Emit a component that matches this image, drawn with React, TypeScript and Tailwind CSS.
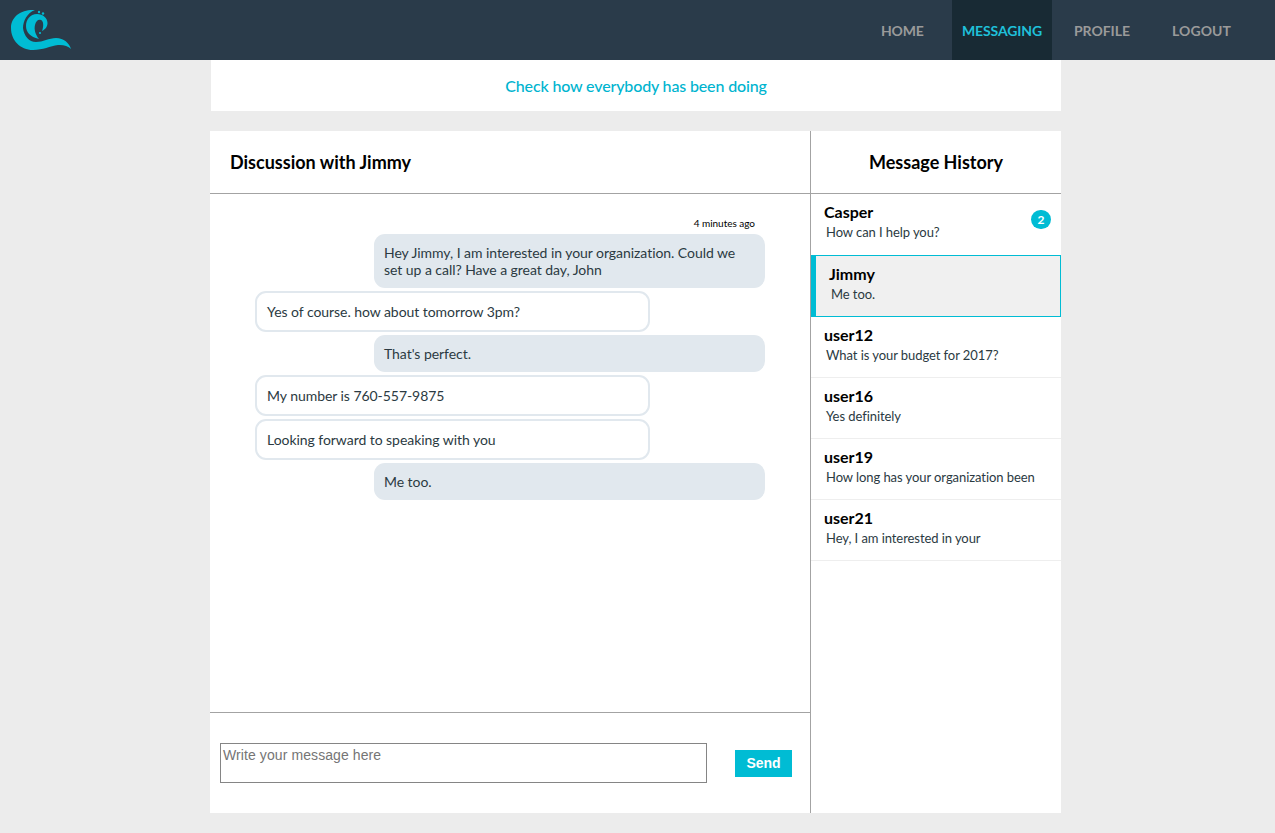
const navItems = [
  { label: "HOME", className: "w-[84px] pl-[13px] tracking-[-0.2px] text-[#9a9a9a]" },
  { label: "MESSAGING", className: "w-[100px] justify-center bg-[#182a34] tracking-[-0.12px] text-[#1fc0da]" },
  { label: "PROFILE", className: "w-[100px] pl-[22px] tracking-[-0.05px] text-[#9a9a9a]" },
  { label: "LOGOUT", className: "w-[103px] pl-[20px] tracking-[0.1px] text-[#9a9a9a]" },
];

const messages = [
  { id: 1, mine: true, text: "Hey Jimmy, I am interested in your organization. Could we set up a call? Have a great day, John" },
  { id: 2, mine: false, text: "Yes of course. how about tomorrow 3pm?" },
  { id: 3, mine: true, text: "That's perfect." },
  { id: 4, mine: false, text: "My number is 760-557-9875" },
  { id: 5, mine: false, text: "Looking forward to speaking with you" },
  { id: 6, mine: true, text: "Me too." },
];

const threads = [
  { name: "user12", text: "What is your budget for 2017?" },
  { name: "user16", text: "Yes definitely" },
  { name: "user19", text: "How long has your organization been" },
  { name: "user21", text: "Hey, I am interested in your" },
];

function Logo() {
  return (
    <svg viewBox="10 8 62 42" className="h-[42px] w-[62px]" fill="#00bcd4">
      <path d="M35 9C22 8 11 15 11 27C11 39 20 49 33 49C43 49 50 45 58 44C63 43.5 68 45 71 48C69 42 64 37 56 37C49 37 43 41 36 41C29 41 24 35 23 27C23 20 27 12 35 9z" />
      <path d="M37 13C30 13 26 19 26 25C26 31 30 36 39 38C35 33 34 28 35 24C36 20 38 18 41 19C43.5 20 44 25 42 30C46 28 47.5 25 47.5 22C47.5 17 43 13 37 13z" />
      <circle cx="39" cy="11" r="1.2" />
      <circle cx="43" cy="12.5" r="1.2" />
      <circle cx="40" cy="32" r="1.1" />
    </svg>
  );
}

function Bubble({ mine, text }: { mine: boolean; text: string }) {
  if (mine) {
    return (
      <div className="ml-[164px] w-[391px] rounded-[11px] bg-[#e1e8ee] px-[10px] py-[10px] text-[14px] leading-[17px] tracking-[-0.05px] text-[#2b3a42]">
        {text}
      </div>
    );
  }
  return (
    <div className="ml-[45px] w-[395px] rounded-[11px] border-2 border-[#e1e8ee] bg-white px-[10px] py-[10px] text-[14px] leading-[17px] tracking-[-0.05px] text-[#2b3a42]">
      {text}
    </div>
  );
}

export default function App() {
  return (
    <div className="flex h-[833px] flex-col overflow-hidden bg-[#ececec] font-['Lato','Open_Sans',sans-serif]">
      <header className="flex h-[60px] shrink-0 items-center justify-between bg-[#2a3b4a] pl-[10px]">
        <Logo />
        <nav className="mr-[20px] flex h-full">
          {navItems.map((item) => (
            <a key={item.label} className={`flex h-full items-center text-[14px] font-bold ${item.className}`}>
              {item.label}
            </a>
          ))}
        </nav>
      </header>

      <div className="ml-[211px] flex h-[51px] w-[850px] shrink-0 items-center justify-center bg-white text-[16px] font-medium tracking-[-0.15px] text-[#00b4cf]">
        Check how everybody has been doing
      </div>

      <main className="ml-[210px] mt-[20px] flex h-[682px] w-[851px] bg-white">
        <section className="flex w-[601px] flex-col border-r border-[#a3a3a3]">
          <h2 className="flex h-[63px] shrink-0 items-center border-b border-[#a3a3a3] pl-[20px] text-[18px] font-bold text-black">
            Discussion with Jimmy
          </h2>
          <div className="flex-1 pt-[23px]">
            <p className="mb-[5px] pr-[55px] text-right text-[10px] leading-[12px] tracking-[-0.02px] text-black">4 minutes ago</p>
            <div className="flex flex-col gap-[3px]">
              {messages.map((message) => (
                <Bubble key={message.id} mine={message.mine} text={message.text} />
              ))}
            </div>
          </div>
          <div className="flex h-[101px] shrink-0 items-start border-t border-[#a3a3a3] pl-[10px] pt-[30px]">
            <textarea
              placeholder="Write your message here"
              className="h-[40px] w-[487px] resize-none border border-[#858585] px-[2px] pb-[2px] pt-[3px] font-['Liberation_Sans',sans-serif] text-[14px] leading-[16px] tracking-[0.09px] placeholder:text-[#757575]"
            />
            <button className="ml-[28px] mt-[7px] h-[27px] w-[57px] bg-[#00bcd4] font-['Liberation_Sans',sans-serif] text-[14px] font-bold text-white">
              Send
            </button>
          </div>
        </section>

        <aside className="flex w-[250px] flex-col">
          <h2 className="flex h-[63px] shrink-0 items-center justify-center border-b border-[#a3a3a3] text-[18px] font-bold text-black">
            Message History
          </h2>
          <div className="relative h-[61px] pl-[13px] pt-[8px]">
            <p className="text-[16px] font-bold leading-[19px] text-black">Casper</p>
            <p className="ml-[2px] mt-[3px] text-[13px] leading-[16px] tracking-[-0.07px] text-[#2b3a42]">How can I help you?</p>
            <span className="absolute right-[10px] top-[16px] flex h-[19px] w-[20px] items-center justify-center rounded-full bg-[#00bcd4] text-[12px] font-bold text-white">
              2
            </span>
          </div>
          <div className="h-[62px] border border-l-[5px] border-[#00bcd4] bg-[#f0f0f0] pl-[13px] pt-[8px]">
            <p className="text-[16px] font-bold leading-[19px] text-black">Jimmy</p>
            <p className="ml-[2px] mt-[3px] text-[13px] leading-[16px] tracking-[-0.07px] text-[#2b3a42]">Me too.</p>
          </div>
          {threads.map((thread) => (
            <div key={thread.name} className="h-[61px] border-b border-[#eeeeee] pl-[13px] pt-[8px]">
              <p className="text-[16px] font-bold leading-[19px] text-black">{thread.name}</p>
              <p className="ml-[2px] mt-[3px] text-[13px] leading-[16px] tracking-[-0.07px] text-[#2b3a42]">{thread.text}</p>
            </div>
          ))}
        </aside>
      </main>
    </div>
  );
}
